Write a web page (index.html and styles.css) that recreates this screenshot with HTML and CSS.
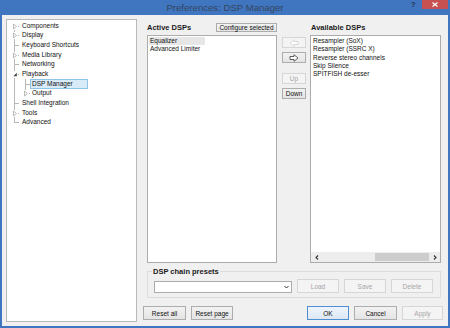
FILE: index.html
```html
<!DOCTYPE html>
<html lang="en">
<head>
  <meta charset="UTF-8">
  <title>Preferences: DSP Manager</title>
  <link rel="stylesheet" href="styles.css">
</head>
<body>
  <div class="window">
    <div class="titlebar">
      <span class="title">Preferences: DSP Manager</span>
      <span class="help">?</span>
      <span class="close">
        <svg width="6" height="5" viewBox="0 0 6 5"><path d="M0.5 0.5 L5.5 4.5 M5.5 0.5 L0.5 4.5" stroke="#fff" stroke-width="1.2"/></svg>
      </span>
    </div>

    <div class="client">
      <div class="tree">
        <div class="node first"><span class="branch twisty"><svg width="6" height="7" viewBox="0 0 6 7"><rect width="6" height="7" fill="#fff"/><path d="M1.5 1 L4.5 3.5 L1.5 6 Z" fill="#fff" stroke="#a8a8a8" stroke-width="0.8"/></svg></span><span class="label">Components</span></div>
        <div class="node"><span class="branch twisty"><svg width="6" height="7" viewBox="0 0 6 7"><rect width="6" height="7" fill="#fff"/><path d="M1.5 1 L4.5 3.5 L1.5 6 Z" fill="#fff" stroke="#a8a8a8" stroke-width="0.8"/></svg></span><span class="label">Display</span></div>
        <div class="node"><span class="branch"></span><span class="label">Keyboard Shortcuts</span></div>
        <div class="node"><span class="branch twisty"><svg width="6" height="7" viewBox="0 0 6 7"><rect width="6" height="7" fill="#fff"/><path d="M1.5 1 L4.5 3.5 L1.5 6 Z" fill="#fff" stroke="#a8a8a8" stroke-width="0.8"/></svg></span><span class="label">Media Library</span></div>
        <div class="node"><span class="branch"></span><span class="label">Networking</span></div>
        <div class="node"><span class="branch twisty"><svg width="6" height="7" viewBox="0 0 6 7"><rect width="6" height="7" fill="#fff"/><path d="M4.8 1.8 L4.8 5.2 L1.4 5.2 Z" fill="#404040"/></svg></span><span class="label">Playback</span></div>
        <div class="node"><span class="rail"></span><span class="branch child"></span><span class="label selected">DSP Manager</span></div>
        <div class="node"><span class="rail"></span><span class="branch child end twisty"><svg width="6" height="7" viewBox="0 0 6 7"><rect width="6" height="7" fill="#fff"/><path d="M1.5 1 L4.5 3.5 L1.5 6 Z" fill="#fff" stroke="#a8a8a8" stroke-width="0.8"/></svg></span><span class="label">Output</span></div>
        <div class="node"><span class="branch"></span><span class="label">Shell Integration</span></div>
        <div class="node"><span class="branch twisty"><svg width="6" height="7" viewBox="0 0 6 7"><rect width="6" height="7" fill="#fff"/><path d="M1.5 1 L4.5 3.5 L1.5 6 Z" fill="#fff" stroke="#a8a8a8" stroke-width="0.8"/></svg></span><span class="label">Tools</span></div>
        <div class="node"><span class="branch end"></span><span class="label">Advanced</span></div>
      </div>

      <div class="page">
        <div class="dsp">
          <div class="head active-head">
            <span class="heading">Active DSPs</span>
            <button class="btn configure">Configure selected</button>
          </div>
          <div></div>
          <div class="head"><span class="heading avail">Available DSPs</span></div>

          <div class="list">
            <div class="item sel">Equalizer</div>
            <div class="item">Advanced Limiter</div>
          </div>

          <div class="movers">
            <button class="btn mover" disabled>
              <svg width="10" height="8" viewBox="0 0 10 8"><path d="M9 2.5 H5 V0.7 L1 4 L5 7.3 V5.5 H9 Z" fill="#fff" stroke="#cfcfcf" stroke-width="0.8"/></svg>
            </button>
            <button class="btn mover">
              <svg width="10" height="8" viewBox="0 0 10 8"><path d="M1 2.5 H5 V0.7 L9 4 L5 7.3 V5.5 H1 Z" fill="#fff" stroke="#3a3a3a" stroke-width="0.8"/></svg>
            </button>
            <button class="btn mover up" disabled>Up</button>
            <button class="btn mover">Down</button>
          </div>

          <div class="list avail-list">
            <div class="items">
              <div class="item">Resampler (SoX)</div>
              <div class="item">Resampler (SSRC X)</div>
              <div class="item">Reverse stereo channels</div>
              <div class="item">Skip Silence</div>
              <div class="item">SPITFISH de-esser</div>
            </div>
            <div class="hscroll">
              <span class="arrow"><svg width="4" height="5" viewBox="0 0 4 5"><path d="M3 0.5 L1 2.5 L3 4.5" fill="none" stroke="#333" stroke-width="1.1"/></svg></span>
              <span class="track"><span class="thumb"></span></span>
              <span class="arrow"><svg width="4" height="5" viewBox="0 0 4 5"><path d="M1 0.5 L3 2.5 L1 4.5" fill="none" stroke="#333" stroke-width="1.1"/></svg></span>
            </div>
          </div>
        </div>

        <fieldset class="presets">
          <legend>DSP chain presets</legend>
          <div class="preset-row">
            <span class="combo">
              <svg width="5" height="4" viewBox="0 0 5 4"><path d="M0.5 1 L2.5 3 L4.5 1" fill="none" stroke="#333" stroke-width="1"/></svg>
            </span>
            <button class="btn small" disabled>Load</button>
            <button class="btn small" disabled>Save</button>
            <button class="btn small" disabled>Delete</button>
          </div>
        </fieldset>

        <div class="footer">
          <button class="btn wide">Reset all</button>
          <button class="btn">Reset page</button>
          <span class="spacer"></span>
          <button class="btn default">OK</button>
          <button class="btn wide">Cancel</button>
          <button class="btn narrow" disabled>Apply</button>
        </div>
      </div>
    </div>
  </div>
</body>
</html>
```

FILE: styles.css
```css
body {
  margin: 0;
  background: #4075c0;
  font-family: "Liberation Sans", Arial, sans-serif;
  font-size: 6.5px;
  color: #111;
}
.window {
  width: 450px;
  height: 328px;
  background: #4075c0;
}
.titlebar {
  height: 15px;
  position: relative;
  text-align: center;
}
.title {
  font-size: 9.6px;
  line-height: 15px;
  color: #34465f;
}
.help {
  position: absolute;
  left: 411px;
  top: 1px;
  font-size: 7.5px;
  font-weight: bold;
  line-height: 8px;
  color: #25344a;
}
.close {
  position: absolute;
  left: 422px;
  top: 0;
  width: 26px;
  height: 9px;
  background: #c75050;
  display: flex;
  align-items: center;
  justify-content: center;
}
.client {
  display: flex;
  height: 311px;
  margin: 0 2px;
  background: #f0f0f0;
}

/* tree */
.tree {
  width: 131px;
  box-sizing: border-box;
  margin: 4px 0 4px 4px;
  padding-top: 1px;
  background: #fff;
  border: 1px solid #b9b9b9;
}
.node {
  height: 9.67px;
  display: flex;
  align-items: center;
  padding-left: 7px;
  white-space: nowrap;
}
.rail, .branch {
  position: relative;
  align-self: stretch;
  flex: none;
}
.rail {
  width: 11px;
}
.branch {
  width: 6px;
}
.branch.child {
  width: 5px;
}
.rail::before, .branch::before {
  content: "";
  position: absolute;
  left: 0;
  top: 0;
  bottom: 0;
  border-left: 1px solid #b8b8b8;
}
.branch::after {
  content: "";
  position: absolute;
  left: 0;
  top: 50%;
  width: 5px;
  border-top: 1px solid #b8b8b8;
}
.first .branch::before {
  top: 50%;
}
.branch.end::before {
  bottom: 50%;
}
.twisty svg {
  position: absolute;
  left: -2px;
  top: 50%;
  margin-top: -3px;
  z-index: 1;
}
.label {
  padding: 0 1px;
  line-height: 8px;
  border: 1px solid transparent;
}
.label.selected {
  padding: 0 14px 0 1px;
  background: #d9ebf9;
  border-color: #8ec3ea;
}

/* right page */
.page {
  flex: 1;
  display: flex;
  flex-direction: column;
  margin: 0 5px 0 6px;
  padding-top: 8px;
}
.dsp {
  display: grid;
  grid-template-columns: 130px 25px 131px;
  grid-template-rows: 9px 228px;
  column-gap: 4px;
  row-gap: 3px;
  padding-left: 4px;
}
.head {
  display: flex;
  align-items: center;
  justify-content: space-between;
}
.heading {
  font-size: 7.5px;
  font-weight: bold;
  color: #1a1a1a;
}
.heading.avail {
  padding-left: 1px;
}
.btn {
  font-family: "Liberation Sans", Arial, sans-serif;
  font-size: 6.5px;
  color: #111;
  height: 14px;
  width: 42px;
  padding: 0;
  margin: 0;
  box-sizing: border-box;
  border: 1px solid #adadad;
  border-radius: 0;
  background: linear-gradient(#f2f2f2, #e4e4e4);
  display: flex;
  align-items: center;
  justify-content: center;
}
.btn:disabled {
  color: #a6a6a6;
  border-color: #d6d6d6;
  background: #f4f4f4;
}
.btn.configure {
  width: 61px;
  height: 9px;
}
.btn.wide {
  width: 43px;
}
.btn.narrow {
  width: 41px;
}
.btn.default {
  border-color: #4f8fd0;
  background: linear-gradient(#eef4fb, #dde8f5);
}
.list {
  background: #fff;
  border: 1px solid #acacac;
  padding: 1px;
  box-sizing: border-box;
}
.item {
  height: 8.3px;
  line-height: 8.3px;
  padding-left: 1px;
  white-space: nowrap;
}
.item.sel {
  width: 55px;
  background: #e6e6e6;
}
.avail-list {
  display: flex;
  flex-direction: column;
  padding: 1px 0 0 0;
}
.avail-list .items {
  flex: 1;
  padding-left: 1px;
}
.hscroll {
  height: 10px;
  display: flex;
  background: #ededed;
}
.arrow {
  width: 11px;
  display: flex;
  align-items: center;
  justify-content: center;
}
.track {
  flex: 1;
  display: flex;
  justify-content: flex-end;
  padding: 1px 0;
}
.thumb {
  width: 54px;
  background: #cdcdcd;
}
.movers {
  display: flex;
  flex-direction: column;
  align-items: flex-end;
  padding-top: 2px;
  gap: 4px;
}
.btn.mover {
  width: 24px;
  height: 11px;
}
.btn.mover.up {
  margin-top: 6px;
}

/* presets group */
.presets {
  margin: 4px 0 0 4px;
  width: 294px;
  box-sizing: border-box;
  border: 1px solid #dcdcdc;
  padding: 3px 7px 4px 6px;
}
.presets legend {
  font-size: 7.5px;
  font-weight: bold;
  line-height: 9px;
  padding: 0 1px;
  margin-left: -2px;
  color: #1a1a1a;
}
.preset-row {
  display: flex;
  align-items: flex-end;
  gap: 5px;
}
.combo {
  width: 138px;
  height: 12px;
  box-sizing: border-box;
  background: #fff;
  border: 1px solid #acacac;
  display: flex;
  align-items: center;
  justify-content: flex-end;
  padding-right: 2px;
}

.footer {
  display: flex;
  gap: 5px;
  margin-top: 8px;
}
.spacer {
  flex: 1;
}
```
